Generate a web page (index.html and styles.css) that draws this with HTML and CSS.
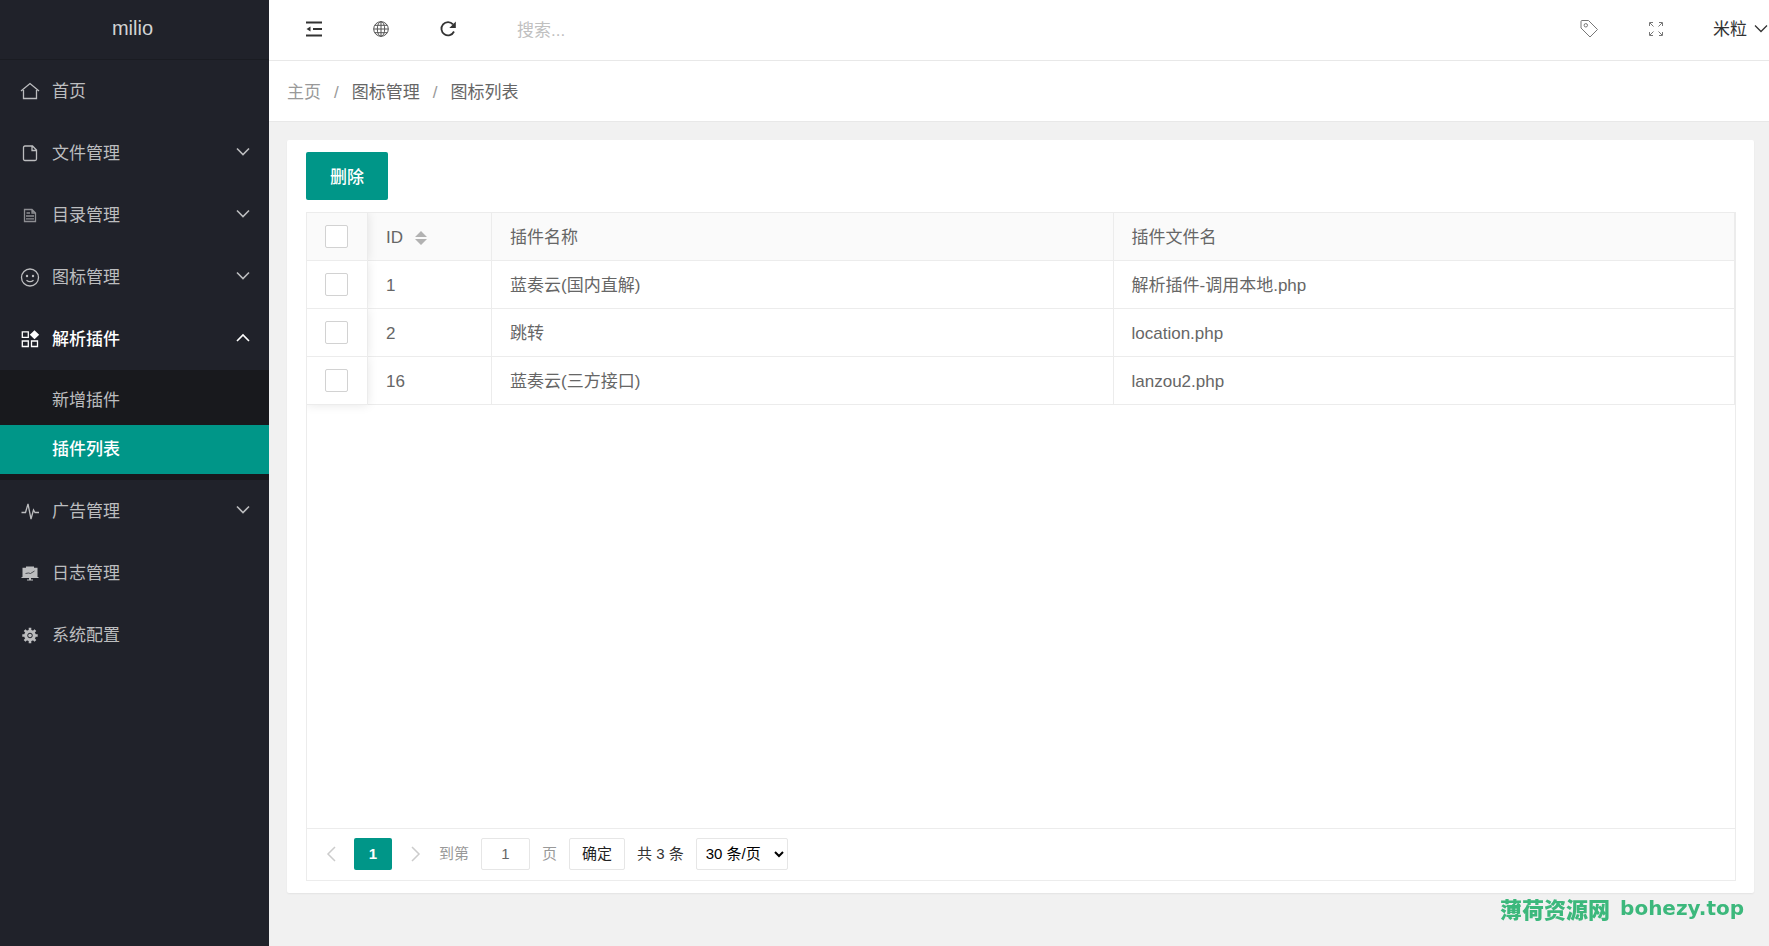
FILE: index.html
```
<!DOCTYPE html>
<html lang="zh-CN">
<head>
<meta charset="utf-8">
<title>milio</title>
<link rel="stylesheet" href="styles.css">
</head>
<body>
<svg class="sprite" aria-hidden="true">
  <symbol id="down" viewBox="0 0 16 10"><path d="M2 1.500l6 6 6-6"/></symbol>
  <symbol id="up" viewBox="0 0 16 10"><path d="M2 8l6-6 6 6"/></symbol>
</svg>
<div class="layout">
  <aside class="sidebar">
    <div class="logo">milio</div>
    <nav>
      <a class="item" href="#"><svg class="icon" viewBox="0 0 20 20"><path d="M1 10l9-7.500 9 7.500M3.500 9v8.500h13V9"/></svg><span>首页</span></a>
      <a class="item" href="#"><svg class="icon" viewBox="0 0 20 20"><path d="M5 3h7.500l4 4V16q0 1.500-1.500 1.500H5Q3.500 17.500 3.500 16V4.500Q3.500 3 5 3zM12 3v4.500h4.500"/></svg><span>文件管理</span><svg class="chev"><use href="#down"/></svg></a>
      <a class="item" href="#"><svg class="icon dim" viewBox="0 0 20 20"><path d="M4.500 4.500h7.500l3.500 3.500v8.500h-11zM12 4.500V8h3.500M6.500 8h3.500M6 11h8M6 13.800h8"/></svg><span>目录管理</span><svg class="chev"><use href="#down"/></svg></a>
      <a class="item" href="#"><svg class="icon" viewBox="0 0 20 20"><circle cx="10" cy="10.500" r="8.500"/><path d="M6.500 13.200q3.500 2.800 7 0"/><circle class="fill" cx="7" cy="9" r="1.200"/><circle class="fill" cx="13" cy="9" r="1.200"/></svg><span>图标管理</span><svg class="chev"><use href="#down"/></svg></a>
      <a class="item open" href="#"><svg class="icon" viewBox="0 0 20 20"><path d="M2.300 2.800h6v5.500h-6zM2.300 12h6v5.500h-6zM11.500 12h6v5.500h-6z"/><path class="fill" d="M14.500 1.200l4.700 4.500-4.700 4.500-4.700-4.500z"/></svg><span>解析插件</span><svg class="chev"><use href="#up"/></svg></a>
      <div class="submenu">
        <a href="#">新增插件</a>
        <a class="current" href="#">插件列表</a>
      </div>
      <a class="item" href="#"><svg class="icon" viewBox="0 0 20 20"><path d="M1.500 11.500h4L8 3l3 15 2.500-9 1.500 2.500h4"/></svg><span>广告管理</span><svg class="chev"><use href="#down"/></svg></a>
      <a class="item" href="#"><svg class="icon" viewBox="0 0 20 20"><path class="fill" d="M6 3.500h8v1.200h3.500v9.300h1v1h-7.500v1.500h2v1H7v-1h2v-1.500H1.500V14h1V4.700H6z"/><path class="dim cut" d="M5.500 10.500l3-.5 2 .5 4-2.500"/></svg><span>日志管理</span></a>
      <a class="item" href="#"><svg class="icon" viewBox="0 0 20 20"><circle class="fill" cx="10" cy="10.500" r="5.800"/><path class="teeth" d="M10 2.800v15.400M2.300 10.500h15.400M4.600 5.100l10.800 10.800M15.400 5.100L4.600 15.900"/><circle class="cut" cx="10" cy="10.500" r="2.300"/></svg><span>系统配置</span></a>
    </nav>
  </aside>
  <div class="page">
    <header class="topbar">
      <button class="tool dark" aria-label="收起菜单"><svg viewBox="0 0 20 20"><path d="M2 3.500h16M9 10h9M2 16.500h16"/><path class="fill" d="M2.500 10l4-2.500v5z"/></svg></button>
      <button class="tool" aria-label="网站"><svg viewBox="0 0 20 20"><circle cx="10" cy="10" r="7.300"/><ellipse cx="10" cy="10" rx="3.700" ry="7.300"/><path d="M10 2.700v14.600M2.700 10h14.600M3.800 6.300h12.400M3.800 13.700h12.400"/></svg></button>
      <button class="tool dark" aria-label="刷新"><svg viewBox="0 0 20 20"><path d="M15 5.300A6.600 6.600 0 1 0 16 12.500"/><path class="fill" d="M17.800 2.500v6.500h-6.500z"/></svg></button>
      <input class="search" type="text" placeholder="搜索..." aria-label="搜索">
      <button class="tool thin" aria-label="标签"><svg viewBox="0 0 20 20"><path d="M2 2.500Q2 1.500 3 1.500h6.500L18.500 10.500l-7.500 7.500L2 9z"/><circle cx="6.800" cy="6.300" r="1.700"/></svg></button>
      <button class="tool thin" aria-label="全屏"><svg viewBox="0 0 20 20"><path d="M3.500 7V3.500H7M4 4l3.500 3.500M13 3.500h3.500V7M16 4l-3.500 3.500M3.500 13v3.500H7M4 16l3.500-3.500M13 16.500h3.500V13M16 16l-3.500-3.500"/></svg></button>
      <button class="user"><span>米粒</span><svg class="chev"><use href="#down"/></svg></button>
    </header>
    <nav class="crumbs"><a href="#">主页</a><i>/</i><span>图标管理</span><i>/</i><span>图标列表</span></nav>
    <main class="main">
      <section class="card">
        <button class="delete">删除</button>
        <div class="grid">
          <table>
            <colgroup><col class="c-check"><col class="c-id"><col><col></colgroup>
            <thead>
              <tr><th><input type="checkbox" aria-label="全选"></th><th><span class="sort">ID<svg viewBox="0 0 12 16"><path d="M6 1l6 6H0zM0 9h12l-6 6z"/></svg></span></th><th>插件名称</th><th>插件文件名</th></tr>
            </thead>
            <tbody>
              <tr><td><input type="checkbox" aria-label="选择 1"></td><td>1</td><td>蓝奏云(国内直解)</td><td>解析插件-调用本地.php</td></tr>
              <tr><td><input type="checkbox" aria-label="选择 2"></td><td>2</td><td>跳转</td><td>location.php</td></tr>
              <tr><td><input type="checkbox" aria-label="选择 16"></td><td>16</td><td>蓝奏云(三方接口)</td><td>lanzou2.php</td></tr>
            </tbody>
          </table>
          <div class="pager">
            <button class="arrow" aria-label="上一页"><svg viewBox="0 0 10 16"><path d="M9 1L2 8l7 7"/></svg></button>
            <button class="num">1</button>
            <button class="arrow" aria-label="下一页"><svg viewBox="0 0 10 16"><path d="M1 1l7 7-7 7"/></svg></button>
            <label class="jump">到第<input type="text" value="1">页</label>
            <button class="ok">确定</button>
            <span class="total">共 3 条</span>
            <select aria-label="每页条数"><option>30 条/页</option></select>
          </div>
        </div>
      </section>
    </main>
  </div>
</div>
<div class="mark"><span>薄荷资源网</span><span class="domain">bohezy.top</span></div>
</body>
</html>
```
FILE: styles.css
```
* { box-sizing: border-box; }
body {
  margin: 0;
  background: #f1f1f1;
  color: #666;
  font: 17px/24px "Liberation Sans", "Noto Sans CJK SC", sans-serif;
}
a { color: inherit; text-decoration: none; }
button, input, select { font: inherit; color: inherit; margin: 0; }
button { padding: 0; border: 0; background: none; }
svg { fill: none; stroke: currentColor; stroke-width: 1.3; flex: none; }
.sprite { display: none; }
.fill { fill: currentColor; stroke: none; }

.layout { display: flex; min-height: 100vh; }

/* Sidebar */
.sidebar { width: 269px; flex: none; background: #20222a; color: #bcbdbf; }
.logo {
  height: 60px;
  padding-right: 4px;
  text-align: center;
  font-size: 20px;
  line-height: 56px;
  color: #d2d3d4;
  border-bottom: 1px solid #1a1c22;
}
.item { display: flex; align-items: center; height: 62px; padding: 0 18px 0 20px; }
.item span { padding-top: 2px; }
.item .icon { width: 20px; height: 20px; margin-right: 12px; }
.item .dim { opacity: .7; }
.item .chev { margin: 0 0 2px auto; }
.chev { width: 16px; height: 10px; stroke-width: 1.6; }
.cut { stroke: #20222a; stroke-width: 1; }
.teeth { stroke-width: 2.6; }
.open, .current { color: #fff; font-weight: 500; }
.submenu { padding: 6px 0; background: #18191d; }
.submenu a { display: block; padding-left: 52px; line-height: 49px; }
.submenu .current { background: #009688; }

/* Top bar */
.page { flex: 1; min-width: 0; display: flex; flex-direction: column; }
.topbar {
  display: flex;
  align-items: center;
  height: 61px;
  padding: 0 0 3px 11px;
  background: #fff;
  border-bottom: 1px solid #e8e8e8;
}
.tool { display: flex; justify-content: center; width: 67px; color: #555; }
.tool svg { width: 20px; height: 20px; stroke-width: 1; }
.dark { color: #333; }
.dark svg { stroke-width: 1.8; }
.thin { color: #777; }
.search { flex: 1; min-width: 0; padding: 4px 36px 0; border: 0; background: none; outline: 0; }
.search::placeholder { color: #c0c0c0; opacity: 1; }
.user { display: flex; align-items: center; gap: 6px; padding-left: 24px; color: #333; }
.user span { padding-top: 3px; }
.user .chev { stroke-width: 1.3; }

.crumbs {
  display: flex;
  align-items: center;
  height: 61px;
  padding: 3px 0 0 18px;
  background: #fff;
  border-bottom: 1px solid #e8e8e8;
}
.crumbs a, .crumbs i { color: #999; }
.crumbs i { margin: 0 13px; font-style: normal; }

/* Content */
.main { flex: 1; display: flex; flex-direction: column; padding: 18px 15px 53px 18px; }
.card {
  flex: 1;
  display: flex;
  flex-direction: column;
  align-items: flex-start;
  gap: 12px;
  padding: 12px 18px 12px 19px;
  background: #fff;
  border-radius: 2px;
  box-shadow: 0 1px 2px rgba(0, 0, 0, .06);
}
.delete { width: 82px; height: 48px; padding-top: 3px; background: #009688; color: #fff; border-radius: 2px; font-weight: 500; }
.grid { flex: 1; width: 100%; display: flex; flex-direction: column; border: 1px solid #ececec; }
table { width: 100%; table-layout: fixed; border-collapse: separate; border-spacing: 0; }
.c-check { width: 61px; }
.c-id { width: 124px; }
th, td {
  height: 48px;
  padding: 2px 18px 0;
  text-align: left;
  font-weight: 400;
  border: solid #ececec;
  border-width: 0 1px 1px 0;
}
th { background: #fafafa; }
th:first-child, td:first-child {
  position: relative;
  padding-top: 0;
  box-shadow: 0 0 10px rgba(0, 0, 0, .1);
  clip-path: inset(0 -12px 0 0);
}
tr:last-child td:first-child { clip-path: inset(0 -12px -12px 0); }
thead tr:last-child th:first-child { clip-path: inset(0 -12px 0 0); }
input[type="checkbox"] {
  display: block;
  appearance: none;
  width: 23px;
  height: 23px;
  background: #fff;
  border: 1px solid #d2d2d2;
  border-radius: 2px;
}
.sort { display: flex; align-items: center; gap: 12px; }
.sort svg { width: 12px; height: 16px; fill: #b2b2b2; stroke: none; }

.pager {
  display: flex;
  align-items: center;
  gap: 12px;
  height: 52px;
  margin-top: auto;
  padding: 0 12px 2px;
  border-top: 1px solid #ececec;
  font-size: 15px;
  color: #333;
}
.pager button, .pager select, .jump input { height: 32px; border-radius: 2px; }
.pager .arrow { width: 23px; color: #ccc; display: flex; align-items: center; justify-content: center; }
.arrow svg { width: 10px; height: 16px; stroke-width: 1.5; }
.pager .num { width: 38px; background: #009688; color: #fff; font-weight: 700; }
.jump { display: flex; align-items: center; gap: 12px; color: #999; }
.jump input { width: 49px; padding: 0; text-align: center; color: #666; border: 1px solid #e6e6e6; background: #fff; }
.pager .ok { width: 56px; border: 1px solid #e6e6e6; color: #222; }
.pager select { width: 92px; padding: 0 0 0 5px; border: 1px solid #e6e6e6; background: #fff; color: #000; }

.mark {
  position: fixed;
  right: 25px;
  bottom: 26px;
  display: flex;
  gap: 10px;
  align-items: center;
  font: 900 22px/24px "Noto Sans CJK SC", sans-serif;
  color: #3cb87c;
}
.domain { font: 700 20px/24px "DejaVu Sans", sans-serif; }
```
